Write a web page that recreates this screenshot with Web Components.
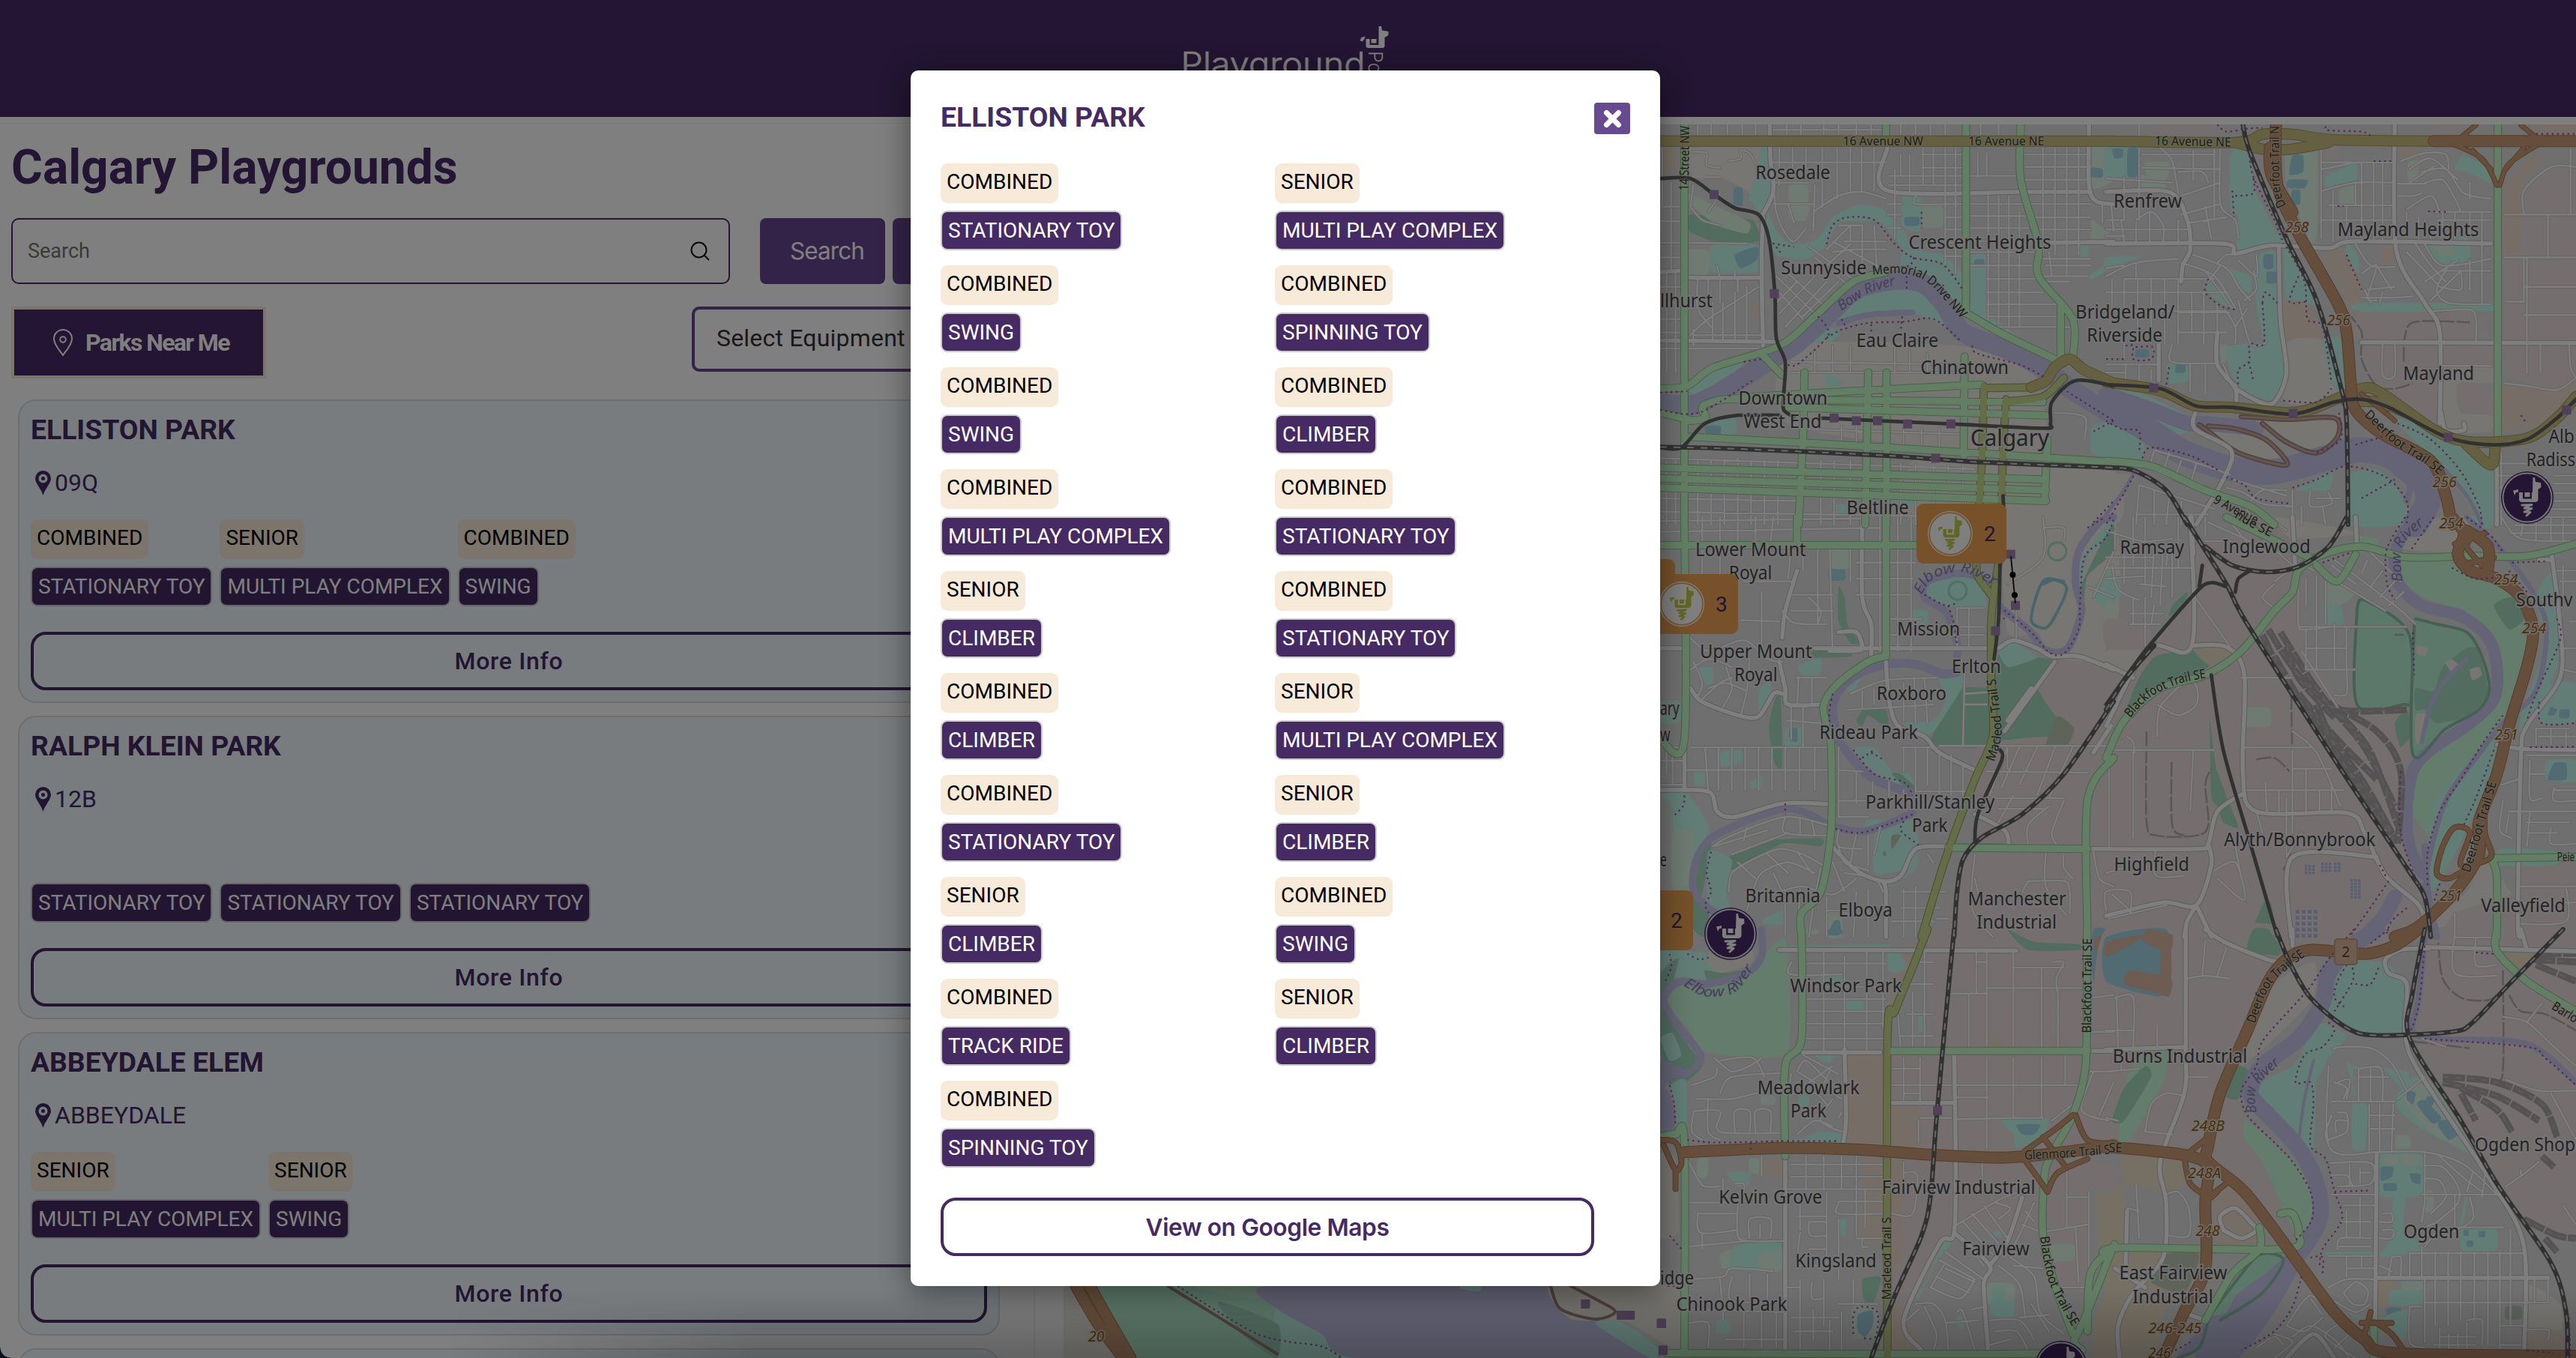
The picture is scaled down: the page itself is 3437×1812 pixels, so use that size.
<!DOCTYPE html>
<html lang="en">
<head>
<meta charset="utf-8">
<title>Calgary Playgrounds</title>
<style>
html,body{margin:0;height:100%;overflow:hidden;background:#fff;font-family:Roboto,"Liberation Sans",sans-serif}
</style>
</head>
<body>
<playground-app></playground-app>
<script>
const define=(name,html,extra)=>{
  const t=document.createElement('template');t.innerHTML=html;
  customElements.define(name,class extends HTMLElement{
    constructor(){super();this.attachShadow({mode:'open'}).append(t.content.cloneNode(true));}
    connectedCallback(){if(extra&&!this.ready){this.ready=true;extra(this,this.shadowRoot);}}
  });
};
const LLAMA=(fg,bg)=>`<g fill="${fg}"><path d="M7.500-27 10-27 11-21 18-20 18.500-14 14.500-11V1.500Q14.500 6 10 6H-7Q-11 6-11 2V-7H-5L7-7Z"/><path d="M-19-9.500-12-11V-7.500L-15-7-17-3Z"/><rect x="-6" y="-8" width="12" height="9.500" fill="${bg}"/><rect x="-3.500" y="-7" width="7" height="6"/><path d="M-7 10 6 9.500-4 14 6 14.500-4 19 4 19.500-1 24" fill="none" stroke="${fg}" stroke-width="3" stroke-linejoin="round" stroke-linecap="round"/></g>`;

define('site-header',`<style>
:host{display:flex;height:156px;background:#462a66;justify-content:center;flex:none}
svg{width:300px;height:156px;display:block}
</style><svg viewBox="1568.500 0 300 156"><text x="1575" y="101" font-family="Inter" font-weight="300" font-size="44" fill="#fff" stroke="#fff" stroke-width=".6" textLength="246" lengthAdjust="spacingAndGlyphs">Playground</text>
<text transform="translate(1825 68) rotate(90)" font-family="Inter" font-weight="300" font-size="25" fill="#fff">Po</text>
<g fill="#fff"><path d="M1822 52h5v8h12V35h3.500l1 5.500 8.500 1.500v5l-5 3v11q0 3-3 3h-19q-3 0-3-3z"/><path d="M1814 54l2-4 5-1.500-1 3.500-3 3.500z"/><path d="M1829 52h7v5.500h-7z"/></g></svg>`);

define('ui-tag',`<style>
:host{display:block;width:max-content;box-sizing:border-box;height:53px;padding:8px 8px 12px;border-radius:9px;background:#f7ead9;color:#000;font:400 28px/33px Roboto,sans-serif;white-space:nowrap}
:host([solid]){padding:8px;border:2px solid #ccc;background:#452a64;color:#fff}
:host([blank]){visibility:hidden}
</style><slot></slot>`);

define('tag-pair',`<style>:host{display:flex;flex-direction:column;gap:10px}</style><ui-tag id="a"></ui-tag><ui-tag id="b" solid></ui-tag>`,(el,r)=>{
  const age=el.getAttribute('age');const a=r.getElementById('a');
  if(age)a.textContent=age;else a.setAttribute('blank','');
  r.getElementById('b').textContent=el.getAttribute('kind');
});

define('outline-button',`<style>
:host{display:flex;box-sizing:border-box;height:78px;border:4px solid #452a64;border-radius:20px;align-items:center;justify-content:center;color:#452a64;font:500 32px/38px Roboto,sans-serif;letter-spacing:.7px}
</style><slot></slot>`);

define('park-card',`<style>
:host{display:flex;flex-direction:column;box-sizing:border-box;height:405px;flex:none;padding:16px 15px 15px;border:2px solid #dcdcdc;border-radius:24px;background:#f0f8ff;color:#452a64}
:host([blank])>*,:host([blank]) .body{display:none}
.body{display:flex;flex-direction:column}
h2{margin:0;font:700 37.300px/45px Roboto,sans-serif}
.loc{display:flex;align-items:center;gap:5px;margin:29px 0 30px;padding-left:6px;height:38px;font:400 32px/38px Roboto,sans-serif}
.loc svg{width:21px;height:33px}
.tags{display:flex;gap:10px;height:116px;margin:0 0 34px}
</style><div class="body"><h2></h2><div class="loc"><svg viewBox="0 0 21 33"><path fill="#452a64" fill-rule="evenodd" d="M10.500 0A10.500 10.500 0 0 1 21 10.500C21 17 13 24 10.500 33 8 24 0 17 0 10.500A10.500 10.500 0 0 1 10.500 0ZM10.500 4.500a6 6 0 1 0 0 12 6 6 0 0 0 0-12Z"/><circle cx="10.500" cy="10.500" r="2.500" fill="#452a64"/></svg><span></span></div><div class="tags"><slot></slot></div></div>`,(el,r)=>{
  if(el.hasAttribute('blank'))return;
  r.querySelector('h2').textContent=el.getAttribute('name');
  r.querySelector('span').textContent=el.getAttribute('area');
  const b=document.createElement('outline-button');b.textContent='More Info';r.querySelector('.body').append(b);
});

define('side-panel',`<style>
:host{display:flex;flex-direction:column;box-sizing:border-box;width:1381px;flex:none;padding:0 45px 0 15px;border-right:2px solid #f2f2f2;border-top:1px solid #f4f4f4}
h1{margin:21px 0 0 0;font:700 64px/76px Roboto,sans-serif;color:#462a66;height:76px}
.row{display:flex;height:88px;margin-top:29px}
.field{box-sizing:border-box;flex:none;width:959px;border:2px solid #462a66;border-radius:10px;display:flex;align-items:center;justify-content:space-between;padding:0 25px 0 20px;color:#757575;font-size:27px}
.field svg{width:26px;height:26px}
.btn{flex:none;margin-left:40px;width:167px;background:#684692;border-radius:8px;color:#fff;font:400 31.500px/88px Inter,sans-serif;text-align:center;letter-spacing:-.9px;text-indent:12px}
.btn+.btn{margin-left:10px}
.row2{display:flex;justify-content:space-between;margin-top:30px;height:96px;align-items:flex-start}
.near{box-sizing:border-box;width:340px;height:96px;border:4px solid #f7ead9;background:#462a66;color:#fff;display:flex;align-items:center;padding:0 0 0 52px;gap:17px;font:700 32px/38px Roboto,sans-serif;letter-spacing:-1.600px;white-space:nowrap}
.near svg{width:26px;height:36px}
.sel{box-sizing:border-box;width:411px;height:87px;border:4px solid #684692;border-radius:10px;padding-left:29px;font-size:32px;line-height:77px;color:#333;letter-spacing:.2px}
.list{display:flex;flex-direction:column;gap:17px;margin:28px 0 0 9px}
</style><h1>Calgary Playgrounds</h1>
<div class="row"><div class="field"><span>Search</span><svg viewBox="0 0 26 26" fill="none" stroke="#111" stroke-width="2"><circle cx="11.500" cy="11.500" r="10"/><path d="M18.500 18.500 25 25"/></svg></div><div class="btn">Search</div><div class="btn"></div></div>
<div class="row2"><div class="near"><svg viewBox="0 0 26 36" fill="none" stroke="#fff" stroke-width="2"><path d="M13 1A12 12 0 0 1 25 13C25 21 17 29 13 35 9 29 1 21 1 13A12 12 0 0 1 13 1Z"/><circle cx="13" cy="14" r="3.800"/></svg>Parks Near Me</div><div class="sel">Select Equipment</div></div>
<div class="list"><slot></slot></div>`);

define('map-pin',`<style>:host{position:absolute;width:70px;height:70px;transform:translate(-50%,-50%)}svg{display:block}</style>
<svg width="70" height="70" viewBox="-35 -35 70 70"><circle r="35" fill="#462a66"/><circle r="32.500" fill="none" stroke="#e8e4ee" stroke-width="2"/>${LLAMA('#fff','#462a66')}</svg>`);

define('map-cluster',`<style>:host{position:absolute;display:flex;box-sizing:border-box;width:120px;height:80px;background:#eca254;border-radius:9px;align-items:center;padding-left:15px;gap:15px;color:#462a66;font:400 28px/33px Roboto,sans-serif}svg{display:block}</style>
<svg width="60" height="60" viewBox="-35 -35 70 70"><circle r="35" fill="#fff"/><circle r="32.500" fill="none" stroke="#eca254" stroke-width="2"/>${LLAMA('#c4cc46','#fff')}</svg><slot></slot>`);

/* Street map: geometry is stored per tile sheet as [originX, originY, unitX, unitY]. */
const SHEET={A:[2200,140,.3954,.3571],B:[2810,140,.4011,.3571],C:[2200,690,.3954,.3571],D:[2810,690,.4011,.3571],E:[2200,1240,.3954,.3648],F:[2810,1240,.4011,.3648],G:[1200,1300,.6633,.3333]};
const AREAS=`
A land 130,160 400,160 405,300 370,380 330,320 240,270 150,270
A park 380,160 415,160 415,320 380,400 340,350 360,260
A ret 38,158 90,158 95,240 38,265
A park 585,480 620,420 700,375 780,385 860,470 900,540 990,560 1060,640 1062,820 1010,700 940,640 880,600 850,600 850,530 780,440 700,435 640,440 600,520 560,560 520,580 470,570 430,560 395,500 400,400 430,470 480,520 550,510
A park 625,820 660,740 760,680 850,665 930,690 1000,780 1010,830 900,780 760,780
A forest 135,410 240,420 350,430 370,510 220,510 135,470
A pitchland 130,330 250,390 340,440 330,480 230,450 140,370
A park 215,525 370,525 370,620 215,625
A pitch 290,560 365,530 365,580 310,610
A pitch 287,312 315,312 315,375 287,370
A pland 475,300 535,300 535,365 475,365
A pland 470,375 540,375 530,430 480,430
A park 855,340 915,340 915,470 855,450
A pitch 865,420 910,420 910,450 865,450
A pland 925,375 990,375 990,455 925,455
A pland 130,545 200,545 200,630 130,630
A park 1090,560 1135,560 1135,770 1090,740
A pitch 1100,578 1130,578 1130,598 1100,598
A park 1085,740 1250,870 1250,890 1180,850 1085,790
A pland 1495,160 1568,160 1568,280 1495,310
A pitch 1495,235 1530,240 1530,270 1495,270
A park 1485,640 1568,580 1568,600 1500,650
A park 1450,525 1480,525 1480,570 1450,570
A pland 1495,430 1560,490 1495,500
A park 140,1040 240,970 330,950 260,1020 150,1080
A park 455,965 600,830 640,860 560,930 490,970
A park 1495,1200 1568,1190 1568,1310 1495,1300
A land 480,900 1050,900 1300,1010 1300,1300 480,1200
A land 900,1320 1340,1350 1568,1360 1568,1568 900,1568
A park 190,1170 290,1170 290,1230 200,1235
A pitch 190,1200 240,1200 240,1230 195,1230
A park 805,1465 890,1465 890,1500 805,1500
A park 600,1000 660,1045 600,1055
A ret 160,1385 700,1400 700,1420 160,1400
A ret 350,740 370,740 370,800 350,800
A park 625,1495 665,1495 665,1525 625,1525
B park 60,160 110,160 110,270 0,275 0,160
B pitch 72,165 104,165 104,265 72,265
B pitch 20,165 55,165 55,195 30,200
B pland 130,215 210,215 200,280 140,270
B park 415,180 470,180 500,330 570,480 600,520 560,530 440,545 440,420 415,390
B ind 170,73 380,73 370,105 170,105
B pland 600,170 700,170 700,500 660,500 640,400 600,300
B pitch 620,190 655,190 655,250 610,260
B pitch 605,280 670,280 660,310 605,310
B pitch 618,320 645,320 645,370 618,370
B park 730,270 830,220 830,285 760,300 735,315
B pland 775,320 830,300 830,370 780,370
B ind 735,160 775,160 775,210 735,210
B ret 975,160 1060,160 1000,210 975,210
B pland 1005,215 1040,210 1035,290 1005,285
B park 1160,240 1190,190 1280,240 1280,290 1200,250
B ind 1090,73 1230,73 1180,110 1090,120
B ret 1430,73 1563,73 1563,105 1430,105
B ret 1325,340 1385,340 1385,560 1325,560
B ret 1330,290 1420,190 1440,220 1390,290 1385,340 1325,340
B ind 1390,340 1480,230 1563,230 1563,400 1390,400
B ind 1325,575 1563,575 1563,1040 1325,1000
B ind 1390,415 1563,415 1563,565 1390,565
B park 1070,530 1200,495 1205,580 1100,595
B pland 1080,510 1150,510 1150,560 1110,560
B park 500,570 560,550 580,700 500,720
B pitch 525,560 555,560 555,610 525,610
B pitch 535,625 565,625 565,665 535,665
B park 590,545 610,545 700,740 660,740 600,735
B park 400,610 480,640 480,700 440,680
B ret 725,540 810,540 870,770 820,770 780,680 730,580
B park 800,510 840,570 840,630 800,560
B ret 585,740 665,740 720,880 600,885
B ind 850,770 1230,770 1230,880 850,885
B park 845,740 1285,745 1285,770 850,772
B land 605,885 730,885 790,1060 680,1120 590,1100
B park 410,900 590,895 600,1000 560,1100 500,1090 440,1050 410,980
B park 500,720 580,710 580,900 530,900
B ind 850,895 1100,895 1100,1170 1000,1130 880,1030
B ind 1115,895 1285,895 1285,970 1115,970
B ind 1170,1040 1285,1070 1285,1160 1180,1130
B land 1115,980 1285,980 1285,1040 1170,1040 1180,1150 1280,1160 1280,1220 1130,1210
B ret 1330,1045 1480,1060 1563,1010 1563,1080 1450,1200 1325,1210
B pland 380,900 405,900 400,960 385,970
B pitch 100,915 140,915 140,942 100,942
B park 205,970 280,980 280,1030 210,1040
B pitch 232,972 262,972 262,1000 232,1000
B park 0,1060 120,1080 250,1150 290,1210 180,1240 0,1100
B park 0,1190 100,1210 130,1290 100,1340 0,1320
B park 800,1390 900,1360 960,1420 1000,1500 1000,1568 810,1568
B park 640,1430 750,1370 740,1440 640,1440
B park 960,1180 1050,1200 1280,1350 1285,1568 1250,1568 1140,1380
B land 310,1195 430,1210 530,1250 600,1330 580,1345 440,1300
B land 450,1165 600,1175 760,1170 770,1240 700,1300 600,1260
B land 0,1385 100,1385 50,1450 0,1500
B park 0,570 120,565 60,590 0,610
B park 330,650 400,700 430,760 380,740 340,700
B ret 915,530 960,530 960,590 915,590
B park 720,880 790,880 800,1050 760,1060
B pland 115,260 200,300 180,320 115,310
C land 1210,0 1568,0 1568,520 1360,520 1310,430 1210,430
C park 920,280 960,220 1100,210 1140,330 1110,340 980,330
C forest 1190,480 1230,475 1300,520 1380,540 1310,620 1375,740 1340,855 960,855 1000,740 1060,640 1150,630
C forest 640,260 660,300 670,400 710,470 680,470 640,390
C park 1180,500 1230,470 1310,520 1280,540 1210,560
C ind 1310,630 1370,550 1568,550 1568,860 1410,850 1430,790 1370,740
C ind 1110,860 1568,860 1568,1568 1000,1568 1060,1280 1100,1220
C green 1380,745 1435,790 1410,855 1340,855
C pitch 610,190 660,195 660,235 610,235
C pland 610,125 675,125 675,190 610,190
C park 890,350 940,350 940,400 890,400
C forest 555,500 680,480 680,520 555,525
C park 505,555 580,525 575,590 520,590
C park 38,690 105,690 105,765 38,765
C forest 425,680 445,680 450,930 425,920 405,790
C park 460,790 510,790 510,860 460,860
C pitch 475,790 500,790 500,840 475,830
C park 240,880 310,870 310,920 240,930
C park 170,565 215,565 215,620 190,620
C park 375,640 410,620 410,700 370,730
C park 660,640 730,580 790,555 720,600 690,650
C park 980,590 1060,590 1050,650 960,800 900,810 860,770 960,760 1000,690
C forest 700,760 730,715 800,720 810,800 790,780 740,740 720,780
C park 690,870 760,860 820,950 880,960 890,1020 770,960
C forest 820,960 850,960 900,1010 890,1035
C park 38,1035 130,1035 200,1150 200,1180 150,1300 120,1480 85,1460 80,1100
C pland 80,1180 150,1180 140,1360 80,1380
C forest 150,1300 210,1220 170,1450 140,1400
C forest 240,1290 400,1210 580,1200 580,1230 450,1220 300,1310 250,1320
C park 200,1250 280,1280 260,1400 280,1480 200,1460
C forest 120,1420 200,1470 190,1568 150,1540
C park 770,1160 880,1110 910,1220 880,1310 760,1330
C green 820,1190 850,1190 820,1240
C pitch 790,1250 800,1250 800,1265 790,1265
C park 740,1130 780,1130 780,1160 725,1160
C park 155,955 185,955 185,1000 155,1000
C park 345,990 380,965 380,1010 345,1010
C park 390,1500 460,1470 460,1520 390,1520
C pland 600,1480 650,1480 650,1568 600,1568
C pitch 625,1510 645,1510 645,1560 605,1560
C park 1460,160 1568,0 1568,60 1480,150 1450,350
C forest 1530,90 1568,30 1568,130 1480,220 1465,350 1450,280
C park 1510,240 1568,250 1568,360 1500,300
C park 780,1360 880,1320 900,1270 910,1280 890,1330 800,1380
D ind 300,120 640,0 640,60 620,200 840,330 840,700 1000,700 1010,870 980,1000 1010,1280 1100,1568 0,1568 0,480 130,480 290,300
D ind 0,380 135,400 135,480 0,480
D land 0,500 130,500 90,590 0,560
D res 665,200 840,280 840,560 800,700 700,560 665,540
D res 750,150 960,260 1040,380 1000,430 850,310
D forest 165,520 300,495 340,560 170,650 90,750 60,740 110,600
D retb 290,490 400,490 410,510 340,550
D forest 345,760 365,930 400,1040 440,1160 390,1140 370,1080 350,1040
D res 1480,120 1563,100 1563,620 1500,620 1510,400
D land 1060,10 1200,0 1160,130 960,110
D park 1200,0 1310,130 1250,60 1300,0
D golf 960,160 1150,170 1300,250 1400,330 1410,480 1340,720 1240,880 1160,1000 1080,1180 1030,1130 1010,1050 1050,930 1250,740 1310,620 1310,500 1200,360 1060,300 990,240
D gol2 835,340 860,310 1005,430 1015,680 990,700 835,700
D gol2 1020,390 1050,380 1200,430 1250,520 1275,640 1240,720 1100,820 1020,885
D forest 1030,640 1090,650 1120,560 1200,490 1240,500 1270,660 1210,740 1100,770 1060,720 1030,720
D forest 1290,330 1350,300 1390,380 1340,420
D land 1035,480 1070,490 1060,520 1035,510
D land 1130,545 1150,530 1175,560 1150,580
D land 1210,570 1240,560 1250,590 1220,610
D land 1030,740 1070,740 1050,840 1030,840
D park 1430,300 1480,210 1500,400 1500,560 1440,700 1380,800 1380,740 1460,480
D park 1070,1250 1100,1050 1300,800 1320,860 1200,1170 1100,1380 1060,1400
D park 1440,680 1460,630 1563,620 1563,760 1450,770
D pitch 1480,710 1500,720 1490,740 1470,740
D pitch 1510,720 1540,720 1540,750 1510,750
D park 1465,910 1563,910 1563,990 1465,980
D pitch 1490,920 1530,920 1530,980 1470,980
D land 1240,1310 1280,1300 1370,1450 1370,1568 1050,1568 1200,1400
D ind 1380,1310 1563,1310 1563,1568 1150,1568 1160,1480 1370,1400
D ind 1280,1250 1563,1260 1563,1310 1280,1300
D park 1310,1240 1500,1250 1490,1300 1310,1300
D forest 530,1430 550,1450 560,1568 480,1568
D land 570,0 840,60 620,80
D park 725,310 780,330 790,400 730,400
D pland 740,240 830,280 780,330 730,310
D forest 220,330 270,280 260,330 210,370
D forest 960,770 1000,720 1020,800 980,860
D pland 465,715 545,715 545,780 465,780
D park 0,200 40,230 50,290 0,340
D pland 0,310 40,340 0,380
D golf 835,70 900,80 900,110 830,110
D water 0,1568 80,1545 200,1568
D sand 130,1568 150,1540 200,1555 210,1568
E park 38,80 200,90 220,180 60,170
E forest 38,170 100,110 60,300 130,420 180,500 120,560 60,560 38,420
E golf 130,200 290,190 380,100 460,40 465,450 200,450 130,360 60,280 80,220
E land 210,80 350,80 340,130 240,160 200,130
E forest 190,150 250,160 330,150 300,190 200,190
E park 40,400 80,380 110,460 70,480
E water 38,480 120,510 160,500 130,540 70,550 38,600
E park 75,570 125,555 125,780 85,760 90,650
E water 38,590 70,600 90,690 80,760 38,790
E land 38,830 90,840 100,1100 38,1120
E ind 960,0 1568,0 1568,800 1200,810 820,790 820,470 960,440
E ind 860,850 1280,850 1330,1100 1100,1100 1030,1110 850,1400 820,1160
E ind 1340,870 1568,870 1568,960 1490,960 1490,1300 1345,1300
E ret 672,455 790,455 790,790 665,790
E ret 820,645 910,645 910,790 820,790
E ret 820,860 855,860 855,1155 820,1300
E ret 730,820 790,830 790,1140 715,1120
E ret 860,60 950,60 840,200 840,320 790,350 760,420 790,360
E park 665,262 722,262 722,292 665,292
E park 805,90 850,90 870,140 840,160 810,150
E park 470,60 790,55 790,65 470,65
E pland 520,0 570,0 570,18 520,18
E pitch 605,0 650,0 650,18 605,18
E park 560,460 620,460 610,490
E park 580,165 650,170 650,210 600,215
E park 530,760 580,740 650,750 650,785 470,775
E park 505,610 540,600 540,640 510,650
E pland 380,610 425,610 425,640 380,640
E pland 340,840 375,840 370,890 340,890
E pland 165,840 200,840 195,905 165,905
E park 265,890 340,890 335,940 300,940
E ret 380,840 450,840 450,900 380,900
E pland 240,1190 290,1170 300,1230 250,1240
E park 290,1160 440,1145 440,1250 280,1240
E pland 370,1180 450,1180 445,1250 375,1245
E park 640,1070 665,1060 665,1120 640,1110
E forest 720,1280 780,1270 780,1300 750,1380 725,1350
E pland 690,1370 770,1390 770,1490 690,1490
E pitch 705,1410 755,1395 755,1450 730,1490 705,1470
E park 230,1430 268,1430 268,1475 230,1475
E park 930,1300 1000,1130 1040,1130 980,1200 910,1350 900,1340
E pland 1145,1295 1230,1300 1230,1360 1145,1370
E park 1160,1310 1200,1310 1200,1360 1230,1360 1230,1415 1155,1410
E pland 1355,1155 1435,1155 1430,1210 1350,1210
E park 1190,695 1345,695 1320,770 1240,800 1230,750
E pitch 1240,715 1320,715 1300,750 1260,750
E forest 1210,0 1300,45 1450,55 1450,75 1280,75
E water 1500,0 1568,20 1568,195 1500,190
E sand 1505,30 1568,20 1568,90 1530,110 1505,70
E retb 1510,960 1568,990 1568,1150 1520,1170
E retb 1510,1400 1568,1300 1568,1568 1500,1568
E park 910,320 925,320 925,370 910,370
E ret 1150,380 1180,375 1200,420 1150,430
E ret 1370,380 1400,380 1400,430 1370,430
E park 1160,1105 1190,1105 1190,1125 1170,1125
E park 1040,1420 1060,1415 1060,1460 1040,1450
E ret 820,1380 860,1380 900,1480 910,1530 820,1540
F ind 0,0 730,0 560,80 430,480 340,760 0,770
F ind 220,760 340,760 340,800 220,790
F ind 370,620 440,640 480,780 600,1020 510,1070 370,850
F ind 1090,0 1563,0 1563,830 1563,1150 1380,1050 1230,800 1050,420 1060,230
F land 470,400 560,200 690,120 690,250 540,420 450,500
F retb 0,1000 60,970 60,1500 0,1568
F retb 60,800 260,830 250,940 180,960 150,940 60,930
F ret 370,970 430,950 510,1060 510,1140 370,1150
F retb 60,1200 200,1190 160,1568 0,1568
F park 820,110 940,130 990,210 985,370 900,400 830,380 740,300 760,160
F park 700,340 800,390 740,470 720,520 700,560 690,800 640,790 510,640 520,560 620,500 660,430
F golf 470,700 640,870 690,960 680,1060 640,1140 520,850 460,770
F forest 440,500 480,530 440,620 400,610
F golf 70,540 130,440 205,440 190,560 80,770 40,770
F forest 60,580 130,500 150,540 60,700 20,700
F water 0,30 200,0 215,200 170,245 0,190
F sand 140,0 220,20 215,80 170,70 120,40
F sand 80,150 215,180 210,245 160,230 60,200
F sand 185,60 215,70 215,200 180,190
F sand 0,50 60,30 130,20 60,70 0,100
F forest 490,0 540,0 580,70 570,95 470,80
F res 740,520 820,490 920,500 980,590 970,640 1220,860 1300,960 1390,1180 1510,1300 1510,1460 1400,1568 450,1568 500,1500 640,1340 720,1260 740,1150 780,1050 740,900 720,720
F res 440,1568 600,1410 670,1330 780,1450 870,1568
F park 960,620 1050,540 1230,820 1100,760 1000,690
F pland 985,620 1070,545 1225,810 1080,740
F pitch 1005,590 1030,600 1020,640 1000,620
F pitch 1070,610 1095,620 1080,650 1060,640
F pitch 1035,640 1060,625 1115,690 1085,710
F pitch 1110,700 1140,700 1170,750 1140,770 1105,720
F park 820,640 870,650 860,800 820,800
F park 910,820 1050,820 1050,970 910,970
F pland 930,830 970,830 970,860 930,860
F pland 985,825 1045,825 1045,860 985,860
F pitch 915,870 955,870 950,905 915,920
F pitch 1010,895 1045,895 1045,930 1020,925
F pitch 925,930 965,930 965,955 925,955
F pland 1060,960 1088,960 1088,1030 1060,1030
F park 955,985 995,985 990,1100 1060,1170 910,1200 950,1130
F park 1185,1095 1295,1095 1295,1175 1185,1175
F pitch 1190,1100 1205,1100 1205,1120 1190,1120
F pitch 1240,1105 1260,1105 1260,1125 1240,1125
F pitch 1200,1140 1220,1140 1220,1160 1200,1160
F retb 905,1290 960,1290 945,1375 900,1375
F pland 980,1290 1050,1290 1050,1320 990,1320
F park 950,1320 1050,1325 1050,1370 945,1375
F pitch 935,1385 980,1385 975,1430 935,1410
F green 1330,1380 1380,1380 1380,1425 1330,1425
F park 960,1400 1010,1400 990,1500 920,1430
F land 1400,1300 1510,1370 1510,1470 1400,1470
F ret 1400,1480 1515,1470 1520,1568 1400,1568
F park 800,490 820,500 820,600 830,600
F park 820,500 1000,520 1000,600 920,510 830,510
F gol2 340,1420 430,1290 510,1190 590,1210 520,1330 380,1430
F green 200,1190 310,1190 260,1330 150,1290
F retb 1320,90 1440,95 1360,150
F park 800,1400 870,1420 880,1380 880,1410 840,1420
F pland 965,755 1010,755 1010,800 965,800
F park 1200,960 1220,900 1190,1060 1170,1110
F park 740,1180 900,1180 900,1190 740,1190
G land 330,1248 400,1248 470,1536 330,1536
G gol2 385,1248 760,1248 760,1536 470,1536
G golf 590,1248 790,1248 760,1300 680,1290
G park 760,1330 850,1430 920,1536 760,1536
G forest 640,1310 760,1400 760,1536 700,1460
G water 740,1248 1310,1248 1330,1350 1450,1400 1520,1536 920,1536 850,1440 760,1340
G land 1310,1248 1568,1248 1568,1500 1460,1390 1350,1380
G park 1400,1400 1450,1390 1530,1500 1510,1536
G park 1130,1248 1170,1248 1165,1270 1130,1260
F water 330,1430 400,1400 440,1330 600,1210 640,1240 560,1400 440,1568 300,1568
F water 230,1568 330,1440 320,1530 240,1568
`;
const LINES=`
A riv26 38,1115 150,1120 260,1060 400,960 500,890 600,790 700,690 830,655 930,670 1000,750 1060,850 1200,910 1340,990 1420,1060 1568,1160
A riv8 640,815 740,785 890,775
B riv20 0,1080 130,1130 270,1190 330,1190 500,1210
B riv34 0,1130 120,1200 260,1300 420,1360 560,1370 700,1330 830,1290 940,1310 1050,1400 1070,1480 1030,1568
B riv5 1100,1330 1200,1460 1250,1568
B riv5 90,1380 60,1440 0,1530
B riv8 960,1370 1010,1420 1000,1480
C riv10 1568,0 1520,20 1450,130 1440,250 1460,350 1420,480 1380,505 1330,490 1280,420 1180,330 1140,240 1050,210 940,240 930,300 1000,350 1020,400 1040,470 1040,520
C riv12 1040,580 990,585 900,550 800,550 700,590 640,650 620,720 640,830 700,920 760,980 880,1030
C riv10 890,1105 800,1150 710,1175 610,1150 540,1110 460,1090 340,1130 210,1200 160,1280 150,1390 200,1460 260,1500
D riv16 1040,0 990,60 960,150 975,250 1050,330 1180,370 1270,450 1300,560 1290,680 1210,770 1080,870 1020,950 1000,1100 1010,1230 1050,1330
D riv5 960,260 1060,340 1180,350 1290,460
D riv7 1200,0 1320,130 1430,300 1465,430 1430,650 1320,770 1250,870 1130,1060 1070,1300 1060,1440
D riv9 1060,1230 1070,1400 1100,1568
D riv6 1200,530 1130,610 1080,700 1050,840
D riv20 960,1420 920,1500 860,1568
F riv22 900,0 820,60 740,160 720,270 640,400 520,500 480,600 540,680 640,800 700,930 710,1060 640,1190 540,1300 420,1540
F riv8 1060,30 1040,250 1020,370 1100,400 1400,420 1563,560
F riv4 690,480 660,620 640,780
E riv10 380,0 380,100 330,160 200,200 110,190 60,230 55,280 120,380 175,460 160,500
C st 38,55 780,40|38,15 730,5|180,0 180,350|240,0 240,330|300,0 300,100|360,0 360,100|420,0 410,100|480,110 470,230|570,110 570,400|520,110 520,200|610,110 620,500|680,110 680,240
C st 780,0 780,500|840,0 840,500|885,0 885,500|920,0 920,170|700,170 900,170|700,230 890,230|700,290 880,290|800,380 920,380|800,440 1130,440|1040,340 1040,480|1080,340 1080,480|1040,410 1130,410|1130,340 1040,340
C st 320,240 480,240|480,290 620,290|480,350 620,350|310,385 440,390|380,280 380,500|450,350 480,390 520,400 600,400|540,300 580,350 570,400|130,440 200,500 320,460 400,530 450,540|130,580 200,530 280,560
C st 150,540 180,620 160,680|260,560 280,640 250,710|340,530 330,650 310,740|200,640 260,620 330,650|180,680 240,620 280,600|480,700 480,830|520,700 520,860|460,700 570,700|500,600 600,600|505,600 500,700|550,600 550,700|465,760 580,770
C st 140,860 600,860|130,945 600,945|190,860 200,1020|235,860 235,1020|280,860 280,1020|325,860 325,1020|370,860 370,1020|415,860 415,1020|460,860 460,1020|508,860 508,1020|560,860 560,1020|38,860 120,860|38,910 120,910|60,860 60,960|38,1000 120,1000|80,860 80,1000
C st 640,860 640,1120|700,950 700,1070|755,990 755,1070|640,945 720,950|640,1060 740,1060|640,1120 740,1120|810,990 810,1060|860,1020 860,1060|670,720 830,710 960,700|680,660 800,610 970,600|860,620 860,760|895,600 900,770|930,600 940,770|760,640 760,700|720,650 720,710
C st 860,860 860,950|900,860 900,1040|940,860 940,1000|980,890 980,1040|1020,890 1020,1040|1060,930 1060,1040|900,1025 1090,1025|850,860 960,860|980,855 1568,855|1065,660 1140,655|1065,700 1140,700|1065,590 1060,850|1140,950 1480,955|1210,860 1150,1040|1250,860 1190,1010|1310,860 1250,1000|1370,860 1310,1040|1430,860 1350,1050|1160,1050 1400,1050|1180,1090 1330,1090|1350,1080 1280,1150 1280,1230|1400,1060 1360,1180 1380,1230|1230,1040 1180,1140
C st 215,1230 280,1190 460,1120 600,1150|460,1120 460,1180 600,1190|220,1230 400,1170|330,1160 320,1210|510,1130 510,1180|550,1140 560,1190|280,1260 470,1180
C st 270,1400 280,1330 350,1280 440,1240 520,1260 600,1310|350,1400 380,1330 470,1290 560,1330|300,1290 360,1350|400,1260 470,1330|500,1250 550,1330|440,1400 520,1380 620,1410 700,1350|350,1400 330,1470|420,1330 450,1400|580,1310 560,1420|620,1290 660,1400|660,1330 760,1350 790,1400|460,1400 460,1560|510,1390 505,1480|560,1410 540,1568|600,1420 600,1568|650,1480 790,1480|600,1470 690,1470|700,1400 690,1568|740,1390 740,1568|640,1170 640,1230 720,1240|700,1180 680,1290|740,1190 740,1300|780,1160 760,1260|640,1230 660,1290 740,1320
C st 850,1400 1000,1400|850,1460 980,1460|820,1510 960,1510|860,1390 860,1568|900,1380 900,1568|940,1260 960,1290|1100,1260 1090,1460 1160,1568|1340,1250 1340,1380 1410,1490|1280,1360 1400,1360 1420,1400 1420,1480|1260,1400 1280,1360|1400,1260 1400,1310 1430,1350|1500,1250 1520,1350 1568,1380|1100,1350 1120,1450|1210,940 1210,860|970,1500 1010,1500|1330,0 1330,150 1210,250|1568,130 1500,300|1480,260 1568,300|1330,40 1400,40 1400,90|1240,340 1240,450
A st 165,73 165,110|210,73 210,110|265,73 265,110|315,73 315,110|360,73 360,110|465,73 465,110|513,73 513,110|590,73 590,110|640,73 640,110|700,73 700,110|750,73 750,110|420,93 800,93|850,73 850,110|900,73 900,110|950,73 950,110|1000,73 1000,110|1120,73 1120,110|1180,73 1180,110
A st 440,160 440,300|485,160 485,280|530,160 530,240|585,160 585,380|635,160 635,350|680,160 680,320|718,160 718,320|760,160 760,320|420,215 800,215|420,290 540,290|555,400 640,340 720,325 800,350|560,300 555,470|420,370 560,370|420,290 430,400 460,480 490,510 530,460|470,370 490,440|600,540 680,450|680,450 680,510|720,450 720,620|760,450 770,620|640,450 720,450|805,410 850,410|805,370 855,370|805,460 850,460|830,240 830,500
A st 925,160 925,300|960,160 960,300|1000,160 1000,600|1035,160 1035,630|920,185 1060,185|810,265 1240,265|920,235 1060,235|810,300 1060,300|850,185 850,265|880,185 880,320|1000,370 1060,370|1000,420 1060,420|1000,465 1060,465|1000,515 1060,515|1000,565 1060,565|900,340 900,370 1000,370|1110,180 1110,270|1140,180 1140,265
A st 1145,340 1145,810|1180,340 1180,820|1215,340 1215,830|1250,400 1250,830|1085,370 1260,370|1085,415 1280,415|1085,460 1280,460|1085,510 1300,510|1085,550 1300,550|1085,600 1310,600|1140,650 1310,650|1140,700 1330,700|1140,745 1380,745|1150,790 1400,790|1170,830 1420,830
A st 1270,185 1490,185|1270,232 1490,232|1270,280 1490,280|1270,370 1490,370|1280,420 1490,420|1290,465 1490,465|1310,575 1490,575|1330,160 1330,560|1370,160 1370,560|1410,160 1410,560|1450,160 1450,560|1330,640 1480,640|1340,600 1490,600|1350,550 1360,640|1410,520 1410,640|1330,660 1420,660|1530,370 1530,440|1560,370 1568,470
A st 45,160 45,380|75,290 75,620|38,380 110,380|38,435 110,435|38,515 110,515|38,570 110,570|38,680 110,680|38,740 110,740|38,800 110,800|38,850 110,850|60,620 60,1000|90,620 90,1000|150,175 195,180 195,225 240,235|240,270 190,270|270,210 310,200 310,170 340,180 360,220|38,910 440,910|150,860 380,860
A st 140,860 200,800 370,680|150,840 150,900|215,740 215,880|250,740 250,880|290,700 290,880|330,680 330,880|165,650 165,760 210,830|200,650 200,740|240,640 240,740|300,650 300,700|130,515 330,518|385,570 385,900|240,650 230,600|290,650 290,620|140,380 180,430 240,450|150,300 140,380|180,310 230,340 200,400|430,640 560,780|440,700 520,800|460,620 600,760|500,660 430,740|560,640 440,780|600,660 460,830|640,660 520,790|540,530 700,660|600,600 680,520|560,570 680,680|620,550 700,540 800,540|660,510 800,510|620,510 800,620
A st 480,1000 1050,1000|480,960 1050,970|560,920 560,1000|620,900 620,1000|680,900 680,1000|830,900 830,1000|880,920 880,1000|940,930 940,1000|480,1210 1050,1230|650,1200 650,1270|700,1200 700,1270|860,1210 860,1280|920,1210 920,1280|980,1210 980,1290|1370,1150 1470,1165 1470,1250|38,1520 1120,1540|165,1330 165,1568|210,1330 210,1568|255,1330 255,1568|300,1320 300,1568|345,1330 345,1568|390,1330 390,1568|435,1330 435,1568|580,1330 580,1568|625,1330 625,1568|680,1330 680,1568|850,1340 850,1568|900,1340 900,1568|960,1340 960,1500|1010,1340 1010,1500|1060,1340 1060,1490|38,1320 1100,1360|60,1330 60,1568|90,1330 90,1568|38,1470 500,1480
B st 120,185 360,185|120,235 380,240|60,270 60,430|110,73 110,430|180,160 220,210 240,330|290,170 290,280|360,160 360,420|240,250 320,250 340,290|0,275 220,290|250,340 380,290|250,410 380,370|100,430 150,400 190,450 190,510|0,430 60,430|50,430 60,510|100,440 100,510|145,400 145,510|240,430 240,510|0,465 270,465|0,490 60,490
B st 380,160 380,370 430,430 440,500|330,380 350,500|280,440 400,420|290,560 400,610 440,680 480,730|250,590 360,640 430,760|0,640 100,590 240,575|60,650 360,650|100,590 100,650|0,700 400,700|0,770 400,770|20,650 20,760|60,650 60,760|105,650 105,890|150,650 150,890|195,650 195,890|240,650 240,890|285,700 285,850|325,700 325,890|370,740 370,970|240,775 410,775|240,850 400,850|400,770 430,830 430,890|440,730 480,890 530,890|430,830 470,760|460,730 500,690 490,620|0,610 60,600|330,620 420,760|380,600 340,660|440,580 500,640 500,560|370,590 400,560 430,560|60,850 60,950|0,970 170,970|65,970 65,1030|110,970 110,1030|0,1000 60,1000|150,990 150,1030|220,895 220,960 370,965|280,970 280,1070|330,970 330,1080|390,970 420,1050
B st 715,215 950,215|720,320 830,290 950,290|715,160 715,500|740,375 960,375|755,320 755,510|800,380 800,500|850,215 850,500|890,215 890,500|920,215 920,500|720,430 960,430|720,240 830,215|830,370 830,290|1065,295 970,295|970,340 1020,340 1050,330|980,210 1060,180 1130,185 1140,240|1010,240 1080,200 1170,280|1050,250 1130,240 1190,330 1280,350|1010,290 1090,230|1060,290 1120,280 1160,350 1180,400|1000,390 1080,340 1110,400|1090,400 1280,400|1000,400 1000,490|1040,420 1040,500|1100,430 1280,430|1120,400 1120,490|1160,400 1160,500|1210,400 1210,490|1250,400 1250,740|1210,350 1210,290|1060,430 1080,500|970,510 1280,515
B st 830,520 880,600 960,605|870,690 960,680|850,630 900,600 870,720 900,730|900,600 950,690|850,720 960,720 1020,715|860,690 880,740|920,700 910,740|1000,550 1060,620 1110,680|1030,520 1080,600 1130,660|1060,660 1170,580|1080,730 1180,620|1110,680 1180,690 1180,620|1060,520 1120,600 1280,575|1120,620 1280,620|1140,600 1100,690 1140,740 1280,745|1210,580 1210,690|1090,770 1210,765 1230,800 1230,880|1325,410 1563,410|1325,570 1563,570|1400,570 1400,1000|1470,410 1470,570|1545,160 1545,410|1395,680 1563,680|1330,735 1390,735|1390,785 1563,785|1320,890 1563,890|1445,890 1445,1000|1390,730 1390,570|1390,410 1390,320 1480,232 1563,232|1115,975 1280,975|920,890 920,1010 960,1010 960,890|1325,1040 1400,1050 1500,1065 1563,1020|1540,890 1545,980 1563,1020
B st 160,1290 280,1330 410,1380|150,1330 160,1290|180,1350 160,1370|160,1370 380,1470|210,1300 190,1370|250,1330 230,1390|300,1340 280,1420|110,1420 360,1510|110,1420 100,1568|160,1440 160,1568|100,1530 340,1530|210,1460 200,1568|250,1480 250,1568|400,1430 460,1450 520,1490 620,1500|420,1400 600,1460|480,1480 520,1440 600,1440|620,1440 620,1568|680,1440 680,1500 750,1490 740,1450|700,1470 780,1470|720,1500 730,1568|650,1500 650,1568|500,1568 450,1480|1315,1300 1315,1568|1310,1340 1563,1340|1310,1385 1380,1385|1310,1430 1340,1430|1490,1385 1563,1385|1490,1415 1563,1415|1490,1450 1563,1450|1490,1480 1563,1480|1480,1510 1563,1510|1450,1540 1563,1540
D st 0,230 130,220|20,180 40,270 110,310|90,0 90,180|30,50 30,120|60,130 60,250|130,0 130,250|160,100 150,300|190,110 180,330|220,110 220,300|0,150 160,150|0,190 280,190|110,250 200,260|80,360 190,360|80,400 180,400|90,300 90,400|130,300 130,480|160,330 150,400|0,50 120,90 220,80|210,100 200,180|240,0 240,190
D st 330,0 330,70|400,0 480,110|460,20 620,180|340,20 560,130|330,90 420,90|540,0 600,50|560,250 520,300 560,340|560,240 640,180 690,200|290,290 410,480|640,240 640,400 660,420 750,410|640,410 1000,410|665,490 800,490|665,570 830,570|700,220 700,570|730,240 730,400|760,400 760,570|800,410 800,570|665,420 665,570|665,230 665,330|780,250 930,350|760,160 960,330 1030,400|850,100 980,240|870,160 850,210|920,200 880,260|960,240 910,300|990,280 940,330|750,180 830,250|800,570 800,660 760,665|650,500 770,710
D st 450,600 620,600|460,860 680,860|620,800 700,880 780,1080|625,940 750,940|470,1020 790,1020|530,990 535,1100|575,1020 575,1100|620,870 620,1180|665,940 665,1100|710,1020 710,1100|750,1000 750,1100|0,870 360,870|90,870 90,1200|10,870 10,1230|280,1095 290,870|170,820 180,710 260,620 300,630 300,700 240,740 170,700|70,820 90,840 95,880|500,1100 520,1180|600,1050 600,1260|360,1320 430,1290 460,1430 370,1350|430,1230 450,1350|165,1240 165,1340 260,1340|0,1470 0,1400 80,1400 80,1480|20,1410 70,1460|10,1500 200,1450|0,1330 60,1310|650,1180 600,1270
D st 1315,0 1380,80 1563,90|1390,0 1380,70|1430,0 1430,90|1480,0 1480,90|1520,0 1520,90|1360,30 1563,30|1345,60 1563,60|1500,200 1563,200|1510,240 1563,240|1520,180 1520,300|1540,390 1563,390|1510,490 1563,490|1520,570 1563,580|1430,790 1540,790|1440,820 1563,820|1430,850 1430,790|1480,790 1480,850|1530,800 1530,860|1400,890 1563,890|1410,910 1410,1050 1450,1050|1410,960 1460,960|1340,1100 1563,1100|1315,1000 1370,980|1320,1060 1310,1170 1350,1200|1340,1110 1330,1180|1410,1100 1400,1230|1400,1140 1540,1140|1400,1180 1500,1180|1480,1160 1480,1220 1563,1220|1490,1020 1563,1020|1490,1010 1490,1060 1563,1060|1160,1480 1160,1568|1530,1380 1530,1510 1380,1520|1380,1380 1563,1380|1380,1440 1563,1440
E st 480,120 480,165 650,165|520,80 520,165|590,80 590,440|660,100 660,440|735,80 735,440|790,80 790,360|530,125 800,125|530,210 800,210|530,255 800,255|530,300 800,300|530,345 800,345|530,400 800,400|870,310 960,310|880,200 960,200|900,120 960,120|850,390 960,390|890,230 890,440|930,70 930,440|840,310 850,440|1105,80 1105,230|1140,80 1140,440|1230,80 1230,440|1325,140 1325,440|1105,120 1140,120|1020,235 1140,235|1140,215 1460,215|1230,140 1400,140|1080,235 1080,440|1380,240 1380,440|1360,120 1400,120 1375,180 1380,240|1490,375 1568,375|1500,250 1568,240
E st 860,470 860,640|915,470 915,640|820,510 910,510|820,570 1020,570|860,600 915,600|1035,465 1035,790|1140,470 1140,800|1230,470 1230,690|1325,470 1325,690|1035,570 1450,570|1035,695 1230,690 1330,690|1405,460 1405,570|1145,615 1035,615|915,690 1020,690|910,700 910,780|1360,700 1430,640|1490,520 1568,520|1500,520 1460,660 1550,700|1520,680 1568,560|1125,850 1125,920|1410,870 1410,1090|1340,1105 1480,1080|1485,960 1485,1300|1410,980 1480,980|1440,1090 1450,1290|1360,1310 1470,1310
E st 145,570 220,540 230,510|220,470 280,520 340,500 380,470|240,480 350,470 390,540|240,600 280,540 460,525|160,620 280,620 360,600 440,590|200,620 200,740 240,770|150,670 145,740 180,770|150,665 240,665 240,740 450,745|290,740 290,665 340,665 340,740|360,740 360,665 410,665 410,740|500,520 530,480 600,550 650,590|540,560 620,500|580,590 610,520|500,520 560,560 650,620|620,620 580,700 650,740|500,750 560,700 620,720|520,460 640,530|480,530 480,600 560,600 600,640|650,670 640,690
E st 130,840 180,935 240,940|250,910 250,960|290,930 320,930 320,960|480,860 790,860|480,905 790,905|470,950 790,950|530,830 530,950|590,830 590,950|650,830 650,950|700,830 700,1120|640,1000 640,1040 790,1040|640,995 790,995|730,950 730,1090|820,1040 890,1040 905,900 860,890|860,850 860,970|380,830 380,900|165,1040 300,1040|165,1040 175,1110 300,1100|340,1130 340,1060 410,1060 410,1130|375,1080 375,1130|300,1000 300,1120 340,1140 450,1140|130,1000 300,1000|180,1110 180,1170|135,1160 330,1140|510,1000 510,1100|505,1050 600,1050|545,1070 600,1070|540,1070 545,1120 600,1120|600,960 600,1250|510,1110 500,1200|495,1230 600,1230|540,1170 600,1170
E st 130,1280 250,1270 280,1240 420,1250|280,1270 280,1360 440,1360|240,1280 250,1400|340,1260 340,1350|400,1260 400,1350|130,1390 450,1400|135,1440 200,1440 200,1530|320,1400 320,1530|380,1400 380,1530|430,1400 430,1530|260,1500 450,1500|250,1400 250,1430|510,1280 510,1540|550,1290 550,1350 590,1350|590,1280 590,1450|555,1390 555,1500|640,1060 640,1280|700,1130 790,1130|720,1130 720,1160 740,1160|690,1280 690,1370|470,1310 510,1310|480,1420 640,1420|490,1470 620,1470|610,1430 610,1540|640,1370 770,1370|650,1400 650,1540
E st 1040,1080 1180,990 1250,960|1090,1040 1180,1150|1060,1070 1160,1190|1130,1010 1210,1130|1170,1000 1220,1020 1180,1060|1060,1130 1130,1230|980,1210 1100,1280|1000,1180 1130,1280|950,1310 1000,1220|950,1310 1050,1350 1100,1280|970,1270 1080,1330|1000,1240 1100,1290|900,1370 960,1370 1000,1430 1010,1540|910,1390 870,1430|930,1380 970,1480 960,1540|1040,1400 1060,1400 1100,1540|1000,1440 1110,1430|1090,1390 1140,1380|1180,1230 1250,1300 1270,1420|1220,1200 1300,1270 1320,1400 1400,1480|1230,1230 1330,1240|1260,1080 1330,1110|1300,1000 1240,1140 1200,1200|1270,1030 1300,1070|1150,1430 1250,1430 1300,1500|1170,1470 1240,1470 1280,1540|1150,1520 1220,1500|1250,1420 1350,1410|1290,1370 1350,1470
F st 30,250 90,250 90,430|35,250 40,430|0,370 90,370|270,180 330,170 410,180|400,70 370,170|330,40 320,170|0,520 110,510|50,510 50,440|130,740 150,640 200,600 260,610|130,740 220,750|275,540 340,540|170,350 170,430|0,690 40,700|100,930 110,1130|200,970 240,960 275,1020 275,1120 210,1120|70,1020 110,1030
F st 755,440 780,430 880,435 950,490 1000,590|840,510 840,630|880,510 880,630|840,510 915,510 920,630|840,540 940,540|750,630 960,630|760,560 800,580 790,620|770,560 810,550 800,620|740,500 745,800 900,815|770,670 800,675 800,740 740,770|750,680 730,750 745,800|765,740 765,700 800,700|875,640 875,810|910,640 910,810|955,640 950,810|880,680 960,680|880,730 960,730|970,620 1060,540|900,815 1060,815 1190,860 1300,970
F st 745,855 880,855 880,930 770,940|750,900 800,900 820,940|810,860 810,940|845,870 845,930|845,890 880,890|750,970 900,970|790,1010 900,1010|800,1030 800,1130|845,980 845,1130|780,1070 880,1070|770,1170 780,1130 880,1130|775,1160 880,1160|920,1040 950,1040 950,1070 910,1070|920,1100 955,1100 950,1130 910,1130|1060,820 1060,1000|1060,865 1120,870 1170,940 1170,1000 1100,1070 1060,1090|1060,910 1110,920 1130,980 1080,1040|1060,1000 1050,1070|1050,970 1300,970|1210,980 1220,1060 1150,1110|1110,830 1180,900 1250,960|1220,890 1200,960|1260,900 1250,980|1160,970 1160,1090
F st 1010,1185 1390,1185|1110,1090 1320,1090|1060,1160 1110,1090|1010,1270 1010,1185|1050,1160 1050,1270|1095,1180 1095,1270|1138,1180 1138,1270|1180,1180 1180,1270|1225,1180 1225,1270|1270,1180 1270,1270|1310,1180 1310,1270|1345,1100 1345,1270|1060,1280 1060,1510|1095,1280 1095,1450|1138,1280 1138,1450|1180,1280 1180,1430|1225,1280 1225,1430|1270,1280 1270,1520|1310,1280 1310,1560|1345,1280 1345,1450|1060,1365 1470,1365|1425,1280 1425,1365|1470,1280 1470,1365|950,1200 980,1200 980,1270|950,1200 940,1270|910,1230 950,1250|1090,1520 1230,1520|1110,1490 1230,1490|1110,1460 1110,1540|1140,1480 1140,1540|1170,1480 1170,1540|1200,1440 1200,1540|1200,1430 1250,1430 1250,1520|1390,1465 1470,1465 1470,1500|1310,1450 1390,1450|1310,1520 1380,1520|1010,1380 1050,1380|1010,1380 1010,1510 1060,1530
F st 740,1310 800,1280 890,1280|760,1360 830,1400 880,1370|790,1330 830,1290 870,1320 860,1370 820,1370 790,1330|800,1200 800,1270|800,1240 890,1240|740,1195 890,1195|850,1200 850,1240|600,1450 680,1340 760,1430|600,1450 660,1470 720,1420|720,1410 680,1350|780,1440 730,1490 830,1568|560,1480 620,1510 560,1568|500,1530 560,1490 590,1520|820,1470 760,1530|620,1490 680,1450 760,1500 810,1568|1050,400 1130,430|1330,550 1440,590 1560,590|1480,600 1563,770|1390,895 1330,940|1390,895 1440,850|1380,880 1380,900|1160,10 1160,160 1300,170|1160,30 1300,30|1230,30 1230,130 1300,130|1320,320 1400,340 1490,430 1563,500|1400,340 1450,270|1520,1010 1563,1080
A rd 408,73 410,200 420,320 385,410|38,625 120,620 140,645 380,645|1485,73 1485,300 1510,360 1568,370|805,160 805,320 1250,325|1260,325 1490,325|1330,515 1568,512|38,880 430,885|385,420 380,600 385,900
C rd 720,0 720,300 750,400 750,520|38,490 110,490|440,540 460,640 470,700 580,700|140,640 180,690 300,740 370,745 420,660 450,660|500,200 460,350 450,450|560,490 1140,490|800,540 810,680 840,780 930,820 980,880 1110,950|38,1020 200,1025 230,1100 290,1120 450,1070 600,1072|610,1220 700,1320 790,1360 850,1340 900,1240 1000,1230|790,1360 800,1400 800,1568|1180,490 1230,460 1310,490 1360,520 1450,520 1568,570|1370,540 1200,800|1100,1110 1200,1170 1215,1230|120,700 120,1020|1060,1230 1200,1230|1490,1240 1568,1240|1560,780 1500,880|610,500 690,500 720,490 700,430 640,430|1210,760 1290,640
B rd 0,325 210,325 270,430 280,540 255,600 250,660|0,518 390,518 430,555 550,525 740,535 830,510 1280,518|960,73 965,540 1060,740 1110,850 1110,1190|850,887 1563,890|430,1145 430,1060 370,970 370,850|430,1060 510,1110 560,1110 600,1000 580,800 575,540|300,1140 295,1210 415,1290 390,1400 300,1568|175,890 175,1030|1300,1330 1300,1568|430,1050 400,1020|1115,1150 1130,1215 1190,1215 1190,1190
D rd 280,0 285,480 140,490 0,780|285,480 400,485 460,590 455,950 500,1100 800,1105 860,1180 930,1340 1040,1450 1080,1568|0,1240 300,1240 340,1220 370,1100 460,1030|340,1220 350,1300 300,1450 190,1440 0,1490|300,1450 270,1510 260,1568|300,1450 350,1568|615,1568 620,1270 900,1270|0,550 90,600|1300,850 1380,865 1563,870|1480,120 1510,400 1510,600 1400,780 1380,900 1370,1500 1380,1568|1480,160 1440,160|620,0 630,200|830,0 835,120|290,140 285,0
E rd 440,75 1240,78|660,440 665,700 650,815|460,840 460,1540|520,450 780,450|820,635 1030,635|1030,465 1035,800 1030,1110 980,1150 860,1430 920,1540|1030,1110 1150,1230 1130,1300 1145,1540|1150,1230 1210,1140 1260,980|1490,445 1568,445
F rd 265,0 265,430 260,600 180,850 200,1000 190,1200 90,1330 40,1450 45,1568|0,440 265,430|330,0 400,50 570,120 630,90|620,0 620,60|1070,70 980,75 930,110 940,160 1000,200 995,380 1040,520 1280,920 1390,1160 1390,1568|1060,65 1563,80|1380,0 1400,75|390,1100 380,1050 430,1020 480,1070 500,1100 450,1130 390,1100|900,820 895,1430|900,1275 1470,1275|30,1240 130,1310|70,1030 65,1230|600,1568 690,1480 760,1568|250,1400 330,1430
C sec 120,0 120,830 38,830|800,0 800,520|500,0 500,95|38,105 900,105
C sec 800,520 740,540 640,620 590,700 600,780 615,860 615,1170 580,1400 515,1480 515,1568|1010,1235 1480,1240|1568,900 1480,1060 1480,1568
D sec 0,900 60,760 180,640 330,590 450,500 560,350 620,280 640,200 720,140 850,110 1000,150 1200,145 1400,145 1563,100|830,140 770,240 700,180|530,70 690,160|1270,1275 1563,1270|1280,1275 1300,1340 1300,1568
B sec 1303,73 1303,1250|0,1330 150,1350 330,1440 480,1500 560,1568|1300,1250 1295,1340
D sec 400,0 530,70
E sec 515,0 515,400 460,500 460,830|810,445 1480,445|38,760 90,750 120,780 120,1540|60,1550 1350,1550 1440,1490 1560,1180 1568,1160|1478,0 1475,480 1430,680 1360,820 1335,900 1330,1120 1370,1300 1430,1480|1480,1470 1490,1260 1560,1170
F sec 0,1200 40,1165 590,1170 640,1110 620,1040 580,1040|510,1090 510,1170 420,1260 330,1430|890,1440 890,1568|1300,0 1300,80 1400,190 1563,300
A sec 120,73 120,1568|1070,73 1070,780|1065,940 1062,1310|1255,73 1255,280 1315,520 1315,640 1430,800 1430,950|1390,750 1390,950|38,1060 130,1050 220,980 440,900 560,790 690,660 800,625|1060,770 1200,860 1400,965|800,73 800,110|130,1180 190,1170 260,1100 1120,1045|380,930 450,1010|38,1150 150,1180|280,1100 1330,1110|460,1130 1340,1160|140,1240 800,1280 1568,1335|38,1355 1340,1400|38,1395 1340,1440|38,1430 1340,1480|525,1000 520,1240 505,1568|740,1000 730,1568|802,1000 802,1568|1345,1250 1335,1480
A mac 1130,1050 1125,1300 1115,1490|1205,1100 1195,1300 1190,1480|1130,1058 1300,1055|1205,1108 1330,1090 1400,1020
C mac 1105,160 1110,220 1155,290|1180,170 1165,280 1155,400 1155,600 1160,820 1100,980 1000,1280 920,1568
E mac 940,0 890,140 830,300 805,400 805,1568
A pri 38,135 1568,135|1290,1055 1340,1030 1370,980 1420,950 1470,990 1568,1040
B pri 0,135 430,140 520,110 620,110 760,130 1090,135|430,140 520,165 620,165 740,140|0,1035 150,1060 210,1080 300,1125 420,1130 600,1150 700,1130 850,1060 920,1080 1100,1220 1220,1260 1400,1245 1500,1170 1563,1090|800,1110 900,1110 1000,1150|1200,1270 1280,1345 1295,1270
B mot 565,73 570,300 640,480 770,740 800,850 815,1050 830,1140 920,1230 1080,1330 1130,1460 1150,1568|545,160 550,260 620,400|1090,135 1563,135
B mot6 1170,130 1230,75|1140,140 1250,200 1300,300|1380,75 1440,130|1450,140 1340,220 1310,300|1200,110 1200,150|1220,170 1280,240|1390,160 1330,240|850,1080 940,1160 960,1180
D mot 1150,0 1190,60 1170,140 1210,200 1300,230 1380,300 1420,420 1400,560 1340,780 1300,960 1240,1140 1240,1260 1160,1400 1040,1530 960,1568|1200,50 1270,110 1270,200
D mot7 1260,1080 1260,1180 1280,1270 1180,1300 1210,1180 1160,1160 1120,1230 1100,1330 1140,1350 1190,1320|1230,60 1200,110 1250,180|1160,100 1260,60|1180,180 1290,150
F mot 1040,0 960,60 860,90 680,75 600,110 540,190 470,370 380,600 340,790 340,850 460,960 600,1160 760,1400 860,1500 960,1550 1563,1560|0,795 150,810 280,830 340,870 330,1000 330,1240 260,1400 190,1568
F mot7 260,830 340,760|260,830 280,930 340,980|340,980 400,930|900,1440 950,1480 990,1540|880,1400 860,1480|850,1440 950,1440|350,980 370,960
E mot 120,815 450,800 700,805 960,825 1200,835 1400,815 1568,790
E mot7 38,770 90,780 110,850 90,880 50,790|1270,810 1360,740 1430,680|1260,830 1320,920 1345,960|1440,680 1480,770 1568,785|1345,960 1380,890 1480,840|1330,760 1400,860|90,880 90,950
G mot 355,1248 400,1400 450,1536|383,1248 420,1380 465,1536
A lrt 38,275 140,275 220,335 290,385 370,410 405,500 425,700 430,870 460,960 455,1080 455,1140 490,1165|38,1280 110,1280 190,1190 300,1160 440,1160|580,1170 1020,1192 1330,1208 1355,1190 1360,1110 1440,1030 1568,1050
A lrt 1195,1460 1200,1568
C lrt 1185,170 1180,380 1165,530|1185,870 1190,910 1110,1110 1100,1220
B lrt 0,1045 180,1060 300,1125 420,1130 620,1155 760,1110 850,1100 940,1130 1130,1240 1280,1270 1400,1250 1500,1170 1563,1100
D lrt 350,590 390,870 480,1220 570,1568|0,700 130,500 300,280 350,245 400,260|320,180 310,260|430,280 440,230 480,200
A rail 38,1278 300,1285 800,1310 1120,1335 1568,1355
B rail 455,73 480,180 600,500 700,730 780,1050 800,1180 805,1568|0,1355 90,1365 200,1440 270,1568
C rail 1568,690 1400,960 1260,1110 1120,1200 1060,1280 1040,1400 1030,1568
D rail 260,0 400,250 470,400 780,940 1000,1310 1060,1420 1080,1568|330,110 420,180 530,205 640,185 740,110 800,0
D rail 0,720 60,610 160,480
E rail 1030,0 1000,340 970,700 950,980 920,1120 830,1340 750,1568
F rail 565,0 610,120 680,250 800,360 900,388 1150,375 1220,340 1350,190 1520,0|1060,0 1020,230 1010,400 1180,700 1300,930 1480,1220 1530,1400 1535,1568
D yard 540,420 620,560 720,680 900,800 980,950 970,1220|520,440 600,620 700,760 850,980 960,1200|580,430 700,640 780,720 1000,720|560,520 720,820 900,1080 960,1220|640,660 760,820 900,980|700,700 780,900 940,1180|740,700 860,860 960,1080|780,740 880,880 970,1150|600,480 640,600 760,750
D spur 135,800 135,1140 170,1190 300,1190 340,1150 330,1000 350,940|218,915 220,1150 260,1190|615,600 620,1180 590,1320|500,905 560,900 610,950|960,440 990,440
F yard 1120,540 1300,560 1450,640 1500,760|1120,560 1300,610 1440,700|1180,580 1300,660 1350,740|1180,600 1230,700|1390,1060 1500,1120 1563,1130|1450,830 1490,870|1460,1130 1500,1180|1420,110 1563,120|1430,130 1563,190|1440,90 1563,88
F spur 1105,50 1120,180 1180,250 1270,260 1310,230|1320,150 1320,520 1290,550|1340,240 1380,300 1460,310 1563,370|1020,410 1210,435
B spur 990,960 995,860 1030,810 1210,812|800,770 850,850 850,950 900,1050 960,1060 1020,1040
B oval 340,1200 430,1210 530,1250 600,1330 580,1345 440,1300 340,1220 310,1195|450,1165 600,1175 760,1170 770,1240 700,1300 600,1260 520,1190
D edge 835,340 860,310 1005,430 1015,680 990,700 835,700 835,340|1030,380 1100,400 1200,430 1250,520 1275,640 1240,720 1130,790 1020,885 1025,400
F edge 340,1420 430,1290 510,1190 590,1210 520,1330 380,1430|340,1430 310,1530 240,1568
G edgb 1310,1248 1330,1340 1400,1380 1440,1350 1400,1300 1350,1248|540,1248 640,1370 760,1520
A path 600,520 620,450 670,420 760,430 830,520 890,570 990,595 1060,690|400,515 490,530|430,530 450,560|570,790 600,830 600,870 500,970 460,965|600,870 650,840 740,815 860,810 960,800 1050,880|650,800 665,830|855,790 850,840|750,820 750,850|895,570 880,600 850,605|870,640 870,690|920,400 920,460|1090,900 1110,930 1250,970 1340,1020|320,960 380,950|38,1140 170,1150 350,1030|38,1075 130,1070|1410,1070 1568,1180|1500,1220 1568,1180|1500,1560 1568,1480
B path 370,73 400,100 460,90 520,85|730,80 740,95 850,100 880,115|475,170 490,270 560,430 590,520|430,340 490,330 490,270|420,320 425,420|600,530 660,660 670,800 720,830 750,1040|640,640 610,735 665,735|340,650 330,700 380,750 430,765|520,740 530,700 570,740|520,740 525,890 480,890|475,900 475,960 440,990 440,1050|475,960 490,1030|210,980 200,1050|65,900 90,900 90,950 150,950 155,905 95,905|0,950 60,950|800,560 830,640 850,690|1130,400 1060,397|890,210 950,210|770,378 790,378|0,1180 50,1210 110,1220 110,1300|120,1320 150,1280 280,1310 380,1370|400,1390 460,1420 500,1470 610,1490|620,1430 700,1400 800,1350 930,1390 1000,1480 1000,1568|850,1470 960,1400|830,1270 920,1240|970,1190 1080,1250 1180,1370 1240,1500 1250,1568|590,1105 700,1110 750,1060|775,1150 780,1250 700,1300|1380,1160 1400,1190|1430,108 1563,108|100,1370 60,1450 0,1568
C path 1568,10 1540,80 1470,150 1455,320 1450,420 1400,510 1350,505 1290,430 1190,340|1480,40 1540,0|930,290 1000,330 1040,320|1010,330 1030,400 1040,480|620,660 610,720 610,780|690,870 760,960 860,990 890,1040|750,880 790,905|720,900 760,870|630,1165 710,1180 800,1150 890,1110|870,1120 850,1170 910,1225|120,1040 115,1080 80,1120|210,1250 195,1330 210,1400 190,1450 210,1490|460,1070 460,1110|1180,370 1200,380
D path 995,0 950,80 930,140 935,250 960,310|1090,0 1040,80 1010,130|1200,0 1280,70 1320,130|720,170 820,130|1150,190 1230,230 1320,220|1350,170 1460,165|1340,200 1400,280|1500,380 1510,460 1430,660 1400,760|1440,690 1450,770 1563,770|1320,740 1250,850 1180,980 1110,1100 1070,1250 1070,1380|1290,870 1230,1050 1190,1150|1020,430 1025,590|1410,860 1563,858|980,950 980,1180 1040,1380|940,1360 860,1490 810,1568|1000,1460 950,1510 930,1568|910,1300 935,1350|1110,1370 1090,1440
E path 70,90 75,140 50,200|130,90 170,110 210,100|70,570 85,640 90,720|130,770 220,780 440,775 640,775|343,780 343,820|70,1120 110,1170|690,1480 690,1410 715,1380 770,1400 765,1490 720,1495
F path 825,0 740,110 680,210 640,260 520,410 500,500 450,590 470,680 560,780 620,850 680,960 685,1060 630,1140|740,340 760,370 720,430 660,460 630,560 680,560 690,640 680,790 730,840 760,960 785,1060 720,1170 710,1240|760,960 880,955|940,0 870,60|800,130 770,190 760,250 800,290|820,140 820,190 760,300|830,200 880,200 910,130|1060,60 1040,280 1010,380|1060,400 1400,430 1460,470 1563,570|680,1200 720,1200 720,1260|650,1270 620,1380 560,1470 450,1540|1230,85 1290,90|1400,1540 1490,1550|230,1540 280,1510|1540,1420 1545,1568
G path 560,1248 640,1350 720,1440 780,1470 850,1490 890,1536|1545,1248 1568,1248
C fair 1400,240 1330,240 1290,380 1330,415 1360,390 1410,270 1370,235 1330,250
`;
const LABELS=`
A 360 612 278 Rosedale
A 876 1357 538 Crescent Heights
A 446 735 632 Sunnyside
A 38 215 756 llhurst
A 700 977 905 Eau Claire
A 917 1214 1005 Chinatown
A 302 603 1120 Downtown
A 320 583 1208 West End
A 667 877 1530 Beltline
B 25 252 383 Renfrew
B 770 1240 490 Mayland Heights
B -102 228 798 Bridgeland/
B -64 188 884 Riverside
B 988 1224 1027 Mayland
B 1472 1558 1263 Alb
B 1398 1561 1350 Radiss
C 157 530 146 Lower Mount
C 270 416 233 Royal
C 838 1050 443 Mission
C 172 550 526 Upper Mount
C 288 434 612 Royal
C 1022 1188 582 Erlton
C 768 1004 684 Roxboro
C 38 103 740 ary
C 38 72 838 w
C 575 908 830 Rideau Park
C 731 1167 1090 Parkhill/Stanley
C 888 1008 1177 Park
C 38 60 1306 e
C 325 579 1440 Britannia
C 640 822 1492 Elboya
C 1076 1408 1450 Manchester
C 1106 1376 1537 Industrial
D 46 260 136 Ramsay
D 388 680 134 Inglewood
D 1364 1552 334 Southv
D 392 896 1228 Alyth/Bonnybrook
D 26 277 1323 Highfield
D 1247 1528 1475 Valleyfield
E 477 853 230 Windsor Park
E 366 711 602 Meadowlark
E 478 599 689 Park
E 236 585 1004 Kelvin Grove
E 786 1304 967 Fairview Industrial
E 1058 1284 1193 Fairview
E 494 768 1236 Kingsland
E 38 152 1298 idge
E 92 466 1396 Chinook Park
F 22 470 488 Burns Industrial
F 1227 1561 810 Ogden Shop
F 990 1175 1128 Ogden
F 44 403 1281 East Fairview
F 88 356 1368 Industrial
`;
const EXITS=`
B 595 674 476 258
B 735 812 822 256
B 1086 1166 1427 256
D 1108 1188 42 254
D 1290 1370 253 254
D 1384 1464 433 254
D 1293 1370 832 251
D 1110 1184 1434 251
F 284 394 738 248B
F 272 382 909 248A
F 298 378 1120 248
F 140 318 1478 246-245
F 140 215 1568 246
G 380 412 1470 20
`;
const ROADNAMES=`
A 0 655,150 928,150 16 Avenue NW
A 0 1078,150 1336,150 16 Avenue NE
B 0 162,150 418,156 16 Avenue NE
A 0 133,320 137,75 14 Street NW
A 0 755,635 850,630 930,655 1000,730 1055,800 Memorial Drive NW
A r 650,770 740,705 835,672 Bow River
B 0 598,375 578,300 575,75 Deerfoot Trail N
B 0 858,1160 960,1270 1060,1340 1110,1385 Deerfoot Trail SE
B 0 355,1485 430,1530 500,1568 9 Avenue
D 0 425,0 490,42 548,75 nue SE
C r 920,290 960,230 1060,205 1165,258 Elbow River
C 0 1165,915 1190,800 1170,600 Macleod Trail S
D 0 80,750 150,670 250,620 335,600 Blackfoot Trail SE
D r 985,240 985,110 1060,25 Bow River
D 0 1210,1330 1250,1180 1300,990 Deerfoot Trail SE
D 0 1500,1284 1561,1284 Peie
E r 115,205 190,245 290,230 355,140 Elbow River
E 0 1492,380 1495,30 Blackfoot Trail SE
E 0 1268,842 1400,835 1560,820 Glenmore Trail S
F 0 8,814 56,816 SE
E 0 817,1355 817,1050 Macleod Trail S
E 0 1320,1125 1350,1290 1430,1455 Blackfoot Trail SE
F 0 495,345 550,200 665,95 Deerfoot Trail SE
F r 500,670 500,580 580,490 Bow River
F 0 1480,290 1561,345 Barlo
`;
define('city-map',`<style>
:host{display:block;position:relative;overflow:hidden;background:#e0dfdf}
.map{display:block}
</style><div id="m"></div><slot></slot>`,(el,r)=>{
  const pts=(s,str)=>str.trim().split(' ').map(p=>{const[x,y]=p.split(',').map(Number),q=SHEET[s];return[+(q[0]+x*q[2]).toFixed(1),+(q[1]+y*q[3]).toFixed(1)];});
  const curve=(p,close)=>{
    let d='M'+p[0];
    if(p.length<3&&!close)return d+'L'+p[1];
    const n=p.length,at=i=>close?p[(i+n)%n]:p[Math.max(0,Math.min(n-1,i))];
    for(let i=0;i<(close?n:n-1);i++){
      const a=at(i-1),b=at(i),c=at(i+1),e=at(i+2),k=close?.1:.15;
      d+=`C${(b[0]+(c[0]-a[0])*k).toFixed(1)},${(b[1]+(c[1]-a[1])*k).toFixed(1)} ${(c[0]-(e[0]-b[0])*k).toFixed(1)},${(c[1]-(e[1]-b[1])*k).toFixed(1)} ${c}`;
    }
    return d+(close?'Z':'');
  };
  const FILL={land:'#f0ece4',park:'#c2faea',forest:'#a4d8c0',golf:'#c8f8d8',gol2:'#b8f0d4',ret:'#ecdccc',retb:'#ece0c8',ind:'#eadcdc',res:'#e0dfdf',pitch:'#a4d4e4',pitchland:'#dff5e0',pland:'#dcf4e4',green:'#bcc8b4',water:'#c8c8ec',sand:'#d8b8a4'};
  let o='';
  const rows=t=>t.trim().split('\n');
  for(const l of rows(AREAS)){const[s,k,...c]=l.split(' ');o+=`<path d="${curve(pts(s,c.join(' ')),true)}" fill="${k==='water'&&(s==='D'||(s==='F'&&l.includes('0,30'))||l.includes('1500,0'))?'#a4d4e4':FILL[k]}"/>`;}
  const S={};
  for(const l of rows(LINES)){const i=l.indexOf(' ',2),s=l[0],k=l.slice(2,i);for(const seg of l.slice(i+1).split('|')){const p=pts(s,seg);if(p.length>1)(S[k]??=[]).push(curve(p));}}
  const line=(k,c,w,x='')=>{if(S[k])o+=`<path d="${S[k].join('')}" fill="none" stroke="${c}" stroke-width="${w}" stroke-linejoin="round" ${x||'stroke-linecap="round"'}/>`;};
  for(const k in S)if(k.startsWith('riv'))line(k,'#c8c8ec',k.slice(3));
  line('edge','#8cc0ac',4);line('edgb','#a08478',4);line('fair','#94c8d8',4);
  line('oval','#a88880',7);line('oval','#c8aca4',3);
  line('spur','#b0acac',2.5,'stroke-dasharray="20 3"');line('yard','#a8a4a4',9,'stroke-dasharray="30 2"');line('yard','#bcb8b8',1.8,'stroke-dasharray="8 9"');
  line('st','#c8c6c6',4);line('rd','#bcbaba',7.5);line('st','#fafafa',2.4);line('rd','#fcfcfc',5.5);
  line('sec','#8cc48c',11);line('mac','#909c60',11);
  line('sec','#c8fccc',9);line('mac','#c8d890',9);
  line('pri','#a49858',15);line('pri','#ccc084',13);
  line('mot7','#b07850',8);line('mot6','#b07850',7);line('mot','#b07850',16);line('mot','#cc9c78',14);line('mot7','#cc9c78',6);line('mot6','#cc9c78',5);
  line('lrt','#646262',4.8);line('rail','#646262',6.2);line('rail','#d0d0d0',2,'stroke-dasharray="9 9"');
  line('path','#a850b0',2.2,'stroke-dasharray="2.500 4.500"');
  for(const[s,x,y]of[['A',220,335],['A',423,705],['A',625,1170],['A',700,1180],['A',771,1180],['A',873,1192],['A',1019,1192],['A',968,1320],['B',158,1058],['B',622,1152],['B',1138,1242],['B',1532,1140],['C',1221,139],['C',1237,330],['C',1170,425],['E',974,663],['E',42,1440],['E',48,1540],['G',1380,1320],['G',1452,1365],['G',1470,1365],['G',1533,1398],['G',1536,1505]]){const q=pts(s,x+','+y)[0];o+=`<rect x="${q[0]-6}" y="${q[1]-6}" width="12" height="12" fill="#a080b0"/>`;}
  o+='<path d="M2683 742 2689 805" stroke="#222" stroke-width="2"/><circle cx="2685.500" cy="767" r="4"/><circle cx="2688" cy="794" r="4"/>';
  for(const[s,x,y]of[['C',1378,128],['C',1042,275]]){const q=pts(s,x+','+y)[0];o+=`<circle cx="${q[0]}" cy="${q[1]}" r="12" fill="none" stroke="#a8dccc" stroke-width="3"/>`;}
  o+='<g fill="#b4bce4">';for(let i=0;i<4;i++)for(let j=0;j<5;j++)o+=`<rect x="${3063+i*8}" y="${1214+j*8}" width="5" height="5"/>`;
  for(const[x,y,a,b]of[[3075,1154,3,3],[3097,1151,3,3],[3114,1151,2,3],[3136,1173,3,6]])for(let i=0;i<a;i++)for(let j=0;j<b;j++)o+=`<rect x="${x+i*5}" y="${y+j*4.500}" width="3.500" height="3.500"/>`;
  o+='</g><g font-family="Noto Sans">';
  for(const l of rows(LABELS)){const[s,a,b,y,...t]=l.split(' ');const p=pts(s,`${a},${y} ${b},${y}`);o+=`<text x="${p[0][0]}" y="${p[0][1]}" font-size="24.500" fill="#484848" stroke="#eceaea" stroke-opacity=".8" stroke-width="4" stroke-linejoin="round" paint-order="stroke" textLength="${(p[1][0]-p[0][0]).toFixed(1)}" lengthAdjust="spacingAndGlyphs">${t.join(' ')}</text>`;}
  o+='<text x="2629" y="595" font-size="30" fill="#484848" stroke="#eceaea" stroke-opacity=".7" stroke-width="4" paint-order="stroke" textLength="105" lengthAdjust="spacingAndGlyphs">Calgary</text>';
  for(const l of rows(EXITS)){const[s,a,b,y,t]=l.split(' ');const p=pts(s,`${a},${y} ${b},${y}`);o+=`<text x="${p[0][0]}" y="${p[0][1]}" font-size="20" font-style="italic" fill="#8c5c20" stroke="#e8dcd0" stroke-width="3" paint-order="stroke" textLength="${(p[1][0]-p[0][0]).toFixed(1)}" lengthAdjust="spacingAndGlyphs">${t}</text>`;}
  rows(ROADNAMES).forEach((l,i)=>{const w=l.split(' ');const s=w[0],riv=w[1]==='r';let j=2;while(/^-?\d+,\d+$/.test(w[j]))j++;const d=curve(pts(s,w.slice(2,j).join(' ')));
    const probe=document.createElementNS('http://www.w3.org/2000/svg','path');probe.setAttribute('d',d);const len=probe.getTotalLength()-1;
    o+=`<path id="n${i}" d="${d}" fill="none"/><text font-size="${riv?19:17}" ${riv?'font-style="italic" fill="#8880b8" stroke="none"':'fill="#3c3c38" stroke="#d8e0c8" stroke-opacity=".5" stroke-width="2"'} paint-order="stroke"><textPath href="#n${i}" textLength="${len.toFixed(1)}" lengthAdjust="spacingAndGlyphs">${w.slice(j).join(' ')}</textPath></text>`;});
  o+='<rect x="3115" y="1253" width="30" height="34" rx="4" fill="#dcb8a0" stroke="#c89c80" stroke-width="2"/><text x="3130" y="1277" font-size="19" text-anchor="middle" fill="#64402c">2</text></g>';
  r.getElementById('m').innerHTML=`<svg class="map" width="2018" height="1646" viewBox="1419 166 2018 1646">${o}</svg>`;
});

define('park-dialog',`<style>
:host{position:absolute;left:1215px;top:94px;width:1000px;height:1622px;box-sizing:border-box;background:#fff;border-radius:10px;padding:40px 40px 40px;display:flex;flex-direction:column;box-shadow:0 8px 40px rgba(0,0,0,.45);color:#452a64}
header{display:flex;justify-content:space-between;height:84px}
h2{margin:0;font:700 37.300px/45px Roboto,sans-serif}
.x{width:48px;height:42px;margin-top:3px;background:#684a91;border-radius:4px;display:flex;align-items:center;justify-content:center}
.grid{display:grid;grid-template-columns:446px 446px;row-gap:20px;margin-bottom:40px}
outline-button{width:872px;font-family:Inter,sans-serif;font-weight:600;font-size:31.700px;letter-spacing:-.4px;padding-top:2px}
</style><header><h2>ELLISTON PARK</h2><div class="x"><svg width="25" height="25" viewBox="0 0 25 25"><path d="M4.500 4.500 20.500 20.500M20.500 4.500 4.500 20.500" stroke="#fff" stroke-width="7" stroke-linecap="round"/></svg></div></header>
<div class="grid"></div><outline-button>View on Google Maps</outline-button>`,(el,r)=>{
  const C='COMBINED',N='SENIOR';
  [[C,'STATIONARY TOY'],[N,'MULTI PLAY COMPLEX'],[C,'SWING'],[C,'SPINNING TOY'],[C,'SWING'],[C,'CLIMBER'],[C,'MULTI PLAY COMPLEX'],[C,'STATIONARY TOY'],[N,'CLIMBER'],[C,'STATIONARY TOY'],[C,'CLIMBER'],[N,'MULTI PLAY COMPLEX'],[C,'STATIONARY TOY'],[N,'CLIMBER'],[N,'CLIMBER'],[C,'SWING'],[C,'TRACK RIDE'],[N,'CLIMBER'],[C,'SPINNING TOY']].forEach(([a,k])=>{
    const t=document.createElement('tag-pair');t.setAttribute('age',a);t.setAttribute('kind',k);r.querySelector('.grid').append(t);});
});

define('playground-app',`<style>
:host{display:flex;flex-direction:column;position:relative;width:3437px;height:1812px;overflow:hidden;background:#fff}
main{display:flex;flex:1;min-height:0;padding-top:8px;gap:38px}
side-panel{overflow:hidden}
city-map{flex:1;margin-top:2px}
.shade{position:absolute;inset:0;background:rgba(0,0,0,.5)}
.foot{position:absolute;left:600px;right:0;bottom:0;height:90px;background:linear-gradient(to bottom,transparent,rgba(0,0,0,.22));-webkit-mask-image:linear-gradient(to right,transparent,#000 400px)}
.corner{position:absolute;left:0;bottom:0;width:14px;height:14px;background:radial-gradient(circle at 100% 0,transparent 13px,#08101e 14px)}
</style><site-header></site-header>
<main><side-panel>
<park-card name="ELLISTON PARK" area="09Q"><tag-pair age="COMBINED" kind="STATIONARY TOY"></tag-pair><tag-pair age="SENIOR" kind="MULTI PLAY COMPLEX"></tag-pair><tag-pair age="COMBINED" kind="SWING"></tag-pair></park-card>
<park-card name="RALPH KLEIN PARK" area="12B"><tag-pair kind="STATIONARY TOY"></tag-pair><tag-pair kind="STATIONARY TOY"></tag-pair><tag-pair kind="STATIONARY TOY"></tag-pair></park-card>
<park-card name="ABBEYDALE ELEM" area="ABBEYDALE"><tag-pair age="SENIOR" kind="MULTI PLAY COMPLEX"></tag-pair><tag-pair age="SENIOR" kind="SWING"></tag-pair></park-card>
<park-card blank></park-card>
</side-panel><city-map>
<map-cluster style="left:1138px;top:506px">2</map-cluster>
<map-cluster style="left:696px;top:580px"></map-cluster>
<map-cluster style="left:780px;top:600px">3</map-cluster>
<map-cluster style="left:720px;top:1022px">2</map-cluster>
<map-pin style="left:1953px;top:498px"></map-pin>
<map-pin style="left:890px;top:1080px"></map-pin>
<map-pin style="left:1331px;top:1658px"></map-pin>
</city-map></main>
<div class="shade"></div><div class="foot"></div><div class="corner"></div>
<park-dialog></park-dialog>`);
</script>
</body>
</html>
